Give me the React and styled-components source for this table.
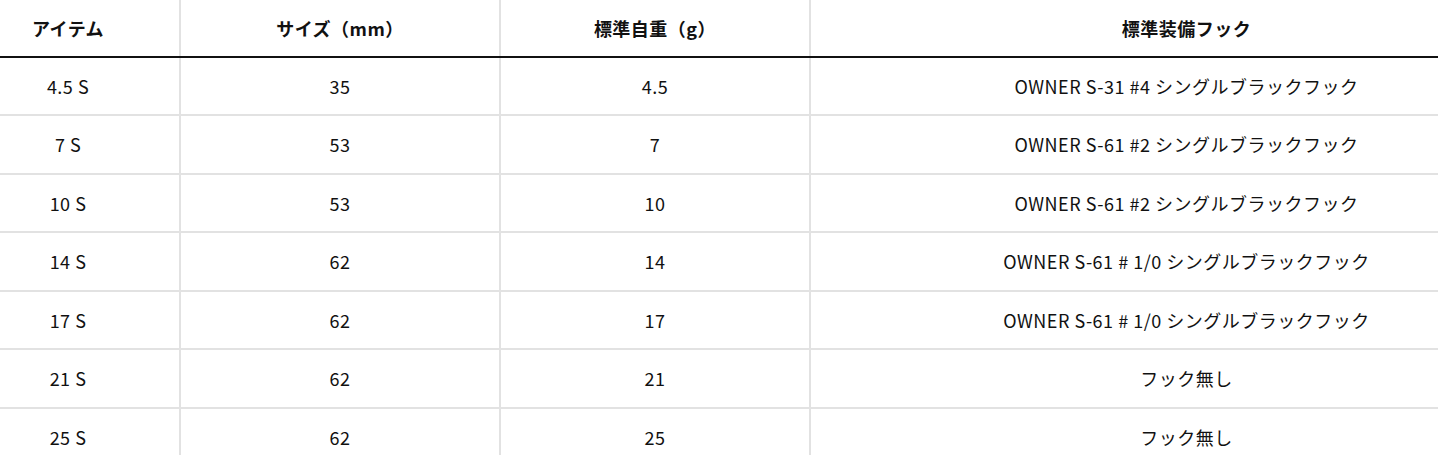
import React from 'react'
import styled, { createGlobalStyle } from 'styled-components'

const GlobalStyle = createGlobalStyle`
  body {
    margin: 0;
    background: #fff;
    font-family: "Noto Sans CJK JP", "Noto Sans", sans-serif;
    color: #111;
  }
`

const Scroller = styled.div`
  width: 1438px;
  overflow: hidden;
`

const Table = styled.table`
  width: 1562px;
  border-collapse: collapse;
  table-layout: fixed;
  font-size: 18px;
  letter-spacing: 0.5px;
`

const Head = styled.th`
  height: 55.5px;
  padding: 0;
  font-weight: 700;
  text-align: center;
  border-bottom: 2px solid #111;
  border-left: 2px solid #e2e2e2;
  &:first-child {
    border-left: none;
    padding-right: 43px;
  }
`

const Cell = styled.td`
  height: 56.5px;
  padding: 0;
  text-align: center;
  border-top: 2px solid #e2e2e2;
  border-left: 2px solid #e2e2e2;
  &:first-child {
    border-left: none;
    padding-right: 43px;
  }
`

const Row = styled.tr`
  &:first-child td {
    border-top: none;
  }
`

const rows = [
  ['4.5 S', '35', '4.5', 'OWNER S-31 #4 シングルブラックフック'],
  ['7 S', '53', '7', 'OWNER S-61 #2 シングルブラックフック'],
  ['10 S', '53', '10', 'OWNER S-61 #2 シングルブラックフック'],
  ['14 S', '62', '14', 'OWNER S-61 # 1/0 シングルブラックフック'],
  ['17 S', '62', '17', 'OWNER S-61 # 1/0 シングルブラックフック'],
  ['21 S', '62', '21', 'フック無し'],
  ['25 S', '62', '25', 'フック無し'],
]

const App = () => {
  return (
    <>
      <GlobalStyle />
      <Scroller>
        <Table>
          <colgroup>
            <col style={{ width: 180 }} />
            <col style={{ width: 320 }} />
            <col style={{ width: 310 }} />
            <col />
          </colgroup>
          <thead>
            <tr>
              <Head>アイテム</Head>
              <Head>サイズ（mm）</Head>
              <Head>標準自重（g）</Head>
              <Head>標準装備フック</Head>
            </tr>
          </thead>
          <tbody>
            {rows.map((r) => (
              <Row key={r[0]}>
                {r.map((c, i) => (
                  <Cell key={i}>{c}</Cell>
                ))}
              </Row>
            ))}
          </tbody>
        </Table>
      </Scroller>
    </>
  )
}

export default App
